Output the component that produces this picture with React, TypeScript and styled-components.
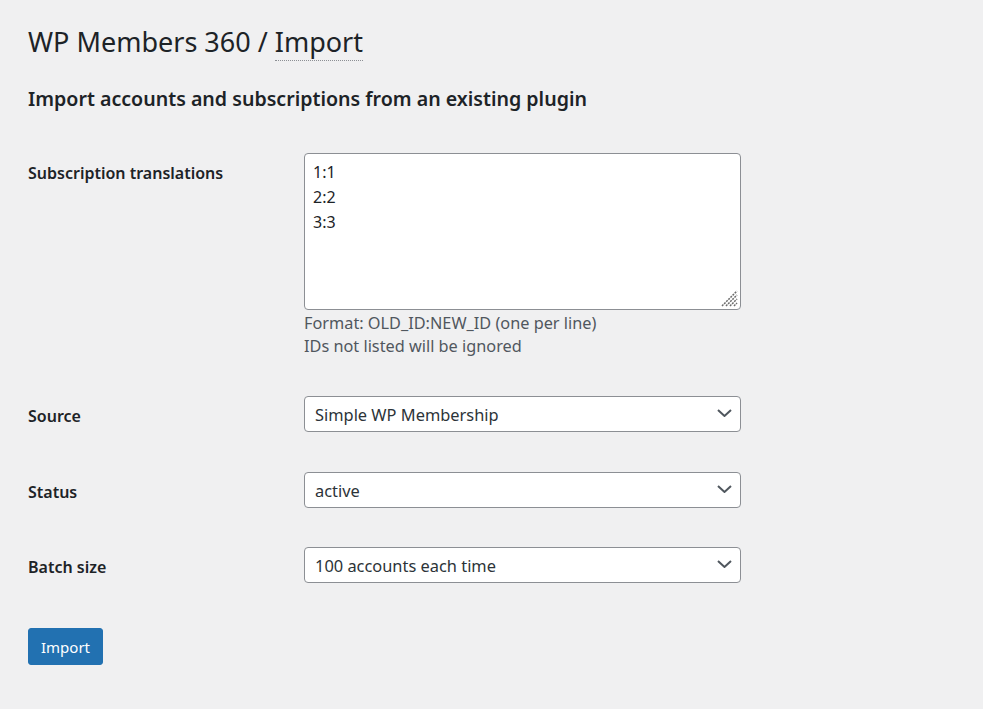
import React from "react";
import styled, { createGlobalStyle } from "styled-components";

const GlobalStyle = createGlobalStyle`
  html, body {
    margin: 0;
    padding: 0;
    background: #f0f0f1;
  }
  body {
    font-family: "Noto Sans", "Open Sans", sans-serif;
    color: #1d2327;
  }
`;

const Wrap = styled.div`
  padding: 25px 28px 40px 28px;
`;

const Title = styled.h1`
  margin: 0;
  font-size: 27px;
  font-weight: 400;
  line-height: 34px;
  color: #1d2327;
`;

const Crumb = styled.span`
  border-bottom: 1px dotted #8c8f94;
`;

const SubHeading = styled.h2`
  margin: 27px 0 0 0;
  font-size: 19.6px;
  font-weight: 600;
  line-height: 26px;
`;

const Form = styled.form`
  margin-top: 41px;
  display: flex;
  flex-direction: column;
`;

const Row = styled.div<{ $gap?: number }>`
  display: grid;
  grid-template-columns: 276px 437px;
  margin-top: ${(p) => p.$gap ?? 0}px;
`;

const Label = styled.label<{ $top: number }>`
  font-size: 16px;
  font-weight: 600;
  line-height: 20px;
  padding-top: ${(p) => p.$top}px;
`;

const Field = styled.div`
  display: flex;
  flex-direction: column;
`;

const TextAreaBox = styled.div`
  position: relative;
  width: 437px;
  height: 157px;
`;

const TextArea = styled.textarea`
  box-sizing: border-box;
  display: block;
  width: 437px;
  height: 157px;
  margin: 0;
  padding: 6px 8px;
  border: 1px solid #8c8f94;
  border-radius: 4px;
  background: #fff;
  font-family: inherit;
  font-size: 16px;
  line-height: 25px;
  color: #1d2327;
  resize: none;
  outline: none;
`;

/* resize grip drawn in the lower right corner of the textarea */
const Grip = styled.svg`
  position: absolute;
  right: 3px;
  bottom: 3px;
  width: 17px;
  height: 17px;
  pointer-events: none;
`;

const Description = styled.p`
  margin: 2px 0 0 0;
  font-size: 16.3px;
  line-height: 23px;
  color: #50575e;
`;

const SelectBox = styled.div`
  position: relative;
  width: 437px;
  height: 36px;
`;

const Select = styled.select`
  box-sizing: border-box;
  width: 100%;
  height: 36px;
  margin: 0;
  padding: 0 30px 0 10px;
  border: 1px solid #8c8f94;
  border-radius: 4px;
  background: #fff;
  font-family: inherit;
  font-size: 16.4px;
  color: #2c3338;
  appearance: none;
  -webkit-appearance: none;
  outline: none;
`;

const Chevron = styled.svg`
  position: absolute;
  right: 9px;
  top: 13px;
  width: 15px;
  height: 8px;
  pointer-events: none;
`;

const Button = styled.button`
  margin-top: 45px;
  align-self: flex-start;
  box-sizing: border-box;
  height: 37px;
  width: 75px;
  padding: 0 10px;
  border: 1px solid #2271b1;
  border-radius: 3px;
  background: #2271b1;
  color: #fff;
  font-family: inherit;
  font-size: 15px;
  cursor: pointer;
`;

type SelectFieldProps = { value: string; options: string[] };

function SelectField({ value, options }: SelectFieldProps) {
  return (
    <SelectBox>
      <Select defaultValue={value}>
        {options.map((o) => (
          <option key={o} value={o}>
            {o}
          </option>
        ))}
      </Select>
      <Chevron viewBox="0 0 15 8">
        <path d="M1 1l6.5 6 6.5-6" fill="none" stroke="#50575e" strokeWidth="2" />
      </Chevron>
    </SelectBox>
  );
}

export default function App() {
  return (
    <>
      <GlobalStyle />
      <Wrap>
        <Title>
          WP Members 360 / <Crumb>Import</Crumb>
        </Title>
        <SubHeading>Import accounts and subscriptions from an existing plugin</SubHeading>
        <Form onSubmit={(e) => e.preventDefault()}>
          <Row>
            <Label $top={10}>Subscription translations</Label>
            <Field>
              <TextAreaBox>
                <TextArea defaultValue={"1:1\n2:2\n3:3"} />
                <Grip viewBox="0 0 17 17">
                  <g stroke="#6b6b6b" strokeWidth="1.5" strokeDasharray="2 1">
                    <path d="M1 16L16 1" />
                    <path d="M5 16L16 5" />
                    <path d="M9 16L16 9" />
                    <path d="M13 16L16 13" />
                  </g>
                </Grip>
              </TextAreaBox>
              <Description>
                Format: OLD_ID:NEW_ID (one per line)
                <br />
                IDs not listed will be ignored
              </Description>
            </Field>
          </Row>
          <Row $gap={38}>
            <Label $top={10}>Source</Label>
            <SelectField
              value="Simple WP Membership"
              options={["Simple WP Membership", "Paid Memberships Pro", "MemberPress"]}
            />
          </Row>
          <Row $gap={40}>
            <Label $top={10}>Status</Label>
            <SelectField value="active" options={["active", "inactive", "pending"]} />
          </Row>
          <Row $gap={39}>
            <Label $top={10}>Batch size</Label>
            <SelectField
              value="100 accounts each time"
              options={["10 accounts each time", "50 accounts each time", "100 accounts each time"]}
            />
          </Row>
          <Button type="submit">Import</Button>
        </Form>
      </Wrap>
    </>
  );
}
